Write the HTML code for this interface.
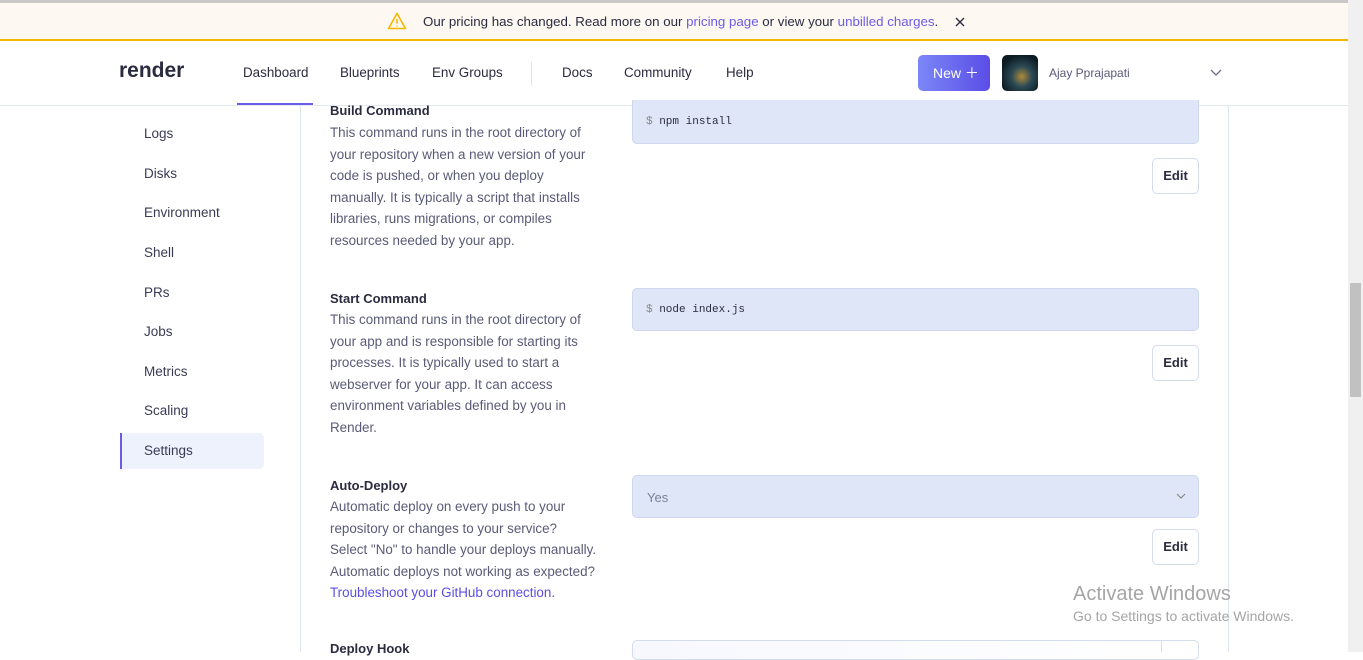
<!DOCTYPE html>
<html><head><style>
*{box-sizing:border-box;margin:0;padding:0}
body{width:1363px;height:652px;overflow:hidden;background:#fff;font-family:"Liberation Sans",sans-serif;position:relative;color:#3d3d5c}
.a{position:absolute}
.banner{left:0;top:0;width:1348px;height:41px;background:#fdf8f1;border-top:3px solid #c8c8c8;border-bottom:2px solid #f5b800;font-size:13.3px;color:#2b2b40}
.hdr{left:0;top:41px;width:1348px;height:65px;border-bottom:1px solid #e3e8f2}
.nav{font-size:13.4px;color:#2b2b40;top:24px}
.side{font-size:13.5px;color:#3a3a55}
.lbl{font-size:13px;font-weight:bold;color:#2b2b40}
.desc{font-size:13.4px;color:#5a5a78;line-height:21.5px;white-space:nowrap}
.box{left:632px;width:567px;background:#dfe6f7;border:1px solid #cdd7ee;border-radius:5px;font-family:"Liberation Mono",monospace;font-size:11px;color:#2b2b40}
.edit{left:1152px;width:47px;height:36px;border:1px solid #d5dcec;border-radius:5px;font-size:13px;color:#2b2b40;text-align:center;line-height:34px;font-weight:bold}
</style></head><body>
<div class="a banner">
<svg class="a" style="left:387px;top:9px" width="20" height="18" viewBox="0 0 20 18"><path d="M10 1.5L1.5 16.5H18.5Z" fill="none" stroke="#f5b800" stroke-width="1.6" stroke-linejoin="round"/><path d="M10 7v4.5M10 13.5v.8" stroke="#f5b800" stroke-width="1.6"/></svg>
<div class="a" style="left:423px;top:11px">Our pricing has changed. Read more on our <span style="color:#6b5ce7">pricing page</span> or view your <span style="color:#6b5ce7">unbilled charges</span>.</div>
<svg class="a" style="left:955px;top:14px" width="10" height="10"><path d="M1 1l8 8M9 1l-8 8" stroke="#2b2b40" stroke-width="1.4"/></svg>
</div>
<div class="a hdr">
<div class="a" style="left:119px;top:18px;font-size:21px;font-weight:bold;color:#2b2b40">render</div>
<div class="a nav" style="left:243px">Dashboard</div>
<div class="a" style="left:237px;top:62px;width:76px;height:2px;background:#6b5ce7"></div>
<div class="a nav" style="left:340px">Blueprints</div>
<div class="a nav" style="left:432px">Env Groups</div>
<div class="a" style="left:531px;top:21px;width:1px;height:23px;background:#dde2ec"></div>
<div class="a nav" style="left:562px">Docs</div>
<div class="a nav" style="left:624px">Community</div>
<div class="a nav" style="left:726px">Help</div>
<div class="a" style="left:918px;top:14px;width:72px;height:36px;border-radius:5px;background:linear-gradient(90deg,#7b87f7,#5a4de6);color:#fff;font-size:14px;line-height:36px;padding-left:15px">New ＋</div>
<div class="a" style="left:1002px;top:14px;width:36px;height:36px;border-radius:5px;background:radial-gradient(circle at 55% 60%,#b08a3a 0,#2b4a55 35%,#0c1a22 75%)"></div>
<div class="a" style="left:1049px;top:25px;font-size:12px;color:#5a5a78">Ajay Pprajapati</div>
<svg class="a" style="left:1210px;top:28px" width="12" height="8"><path d="M1 1l5 5 5-5" fill="none" stroke="#6a6f8a" stroke-width="1.3"/></svg>
</div>
<div class="a" style="left:300px;top:106px;width:1px;height:546px;background:#dde3f0"></div>
<div class="a" style="left:1228px;top:106px;width:1px;height:546px;background:#dde3f0"></div>
<div class="a side" style="left:144px;top:126px">Logs</div>
<div class="a side" style="left:144px;top:166px">Disks</div>
<div class="a side" style="left:144px;top:205px">Environment</div>
<div class="a side" style="left:144px;top:245px">Shell</div>
<div class="a side" style="left:144px;top:285px">PRs</div>
<div class="a side" style="left:144px;top:324px">Jobs</div>
<div class="a side" style="left:144px;top:364px">Metrics</div>
<div class="a side" style="left:144px;top:403px">Scaling</div>
<div class="a" style="left:120px;top:433px;width:144px;height:36px;background:#eef2fc;border-radius:0 5px 5px 0;border-left:2px solid #6b5ce7"></div>
<div class="a side" style="left:144px;top:443px">Settings</div>

<div class="a lbl" style="left:330px;top:103px">Build Command</div>
<div class="a desc" style="left:330px;top:122px">This command runs in the root directory of<br>your repository when a new version of your<br>code is pushed, or when you deploy<br>manually. It is typically a script that installs<br>libraries, runs migrations, or compiles<br>resources needed by your app.</div>
<div class="a box" style="top:100px;height:44px;border-top:none;border-radius:0 0 5px 5px;padding:16px 0 0 13px"><span style="color:#888">$</span> npm install</div>
<div class="a edit" style="top:158px">Edit</div>

<div class="a lbl" style="left:330px;top:291px">Start Command</div>
<div class="a desc" style="left:330px;top:309px">This command runs in the root directory of<br>your app and is responsible for starting its<br>processes. It is typically used to start a<br>webserver for your app. It can access<br>environment variables defined by you in<br>Render.</div>
<div class="a box" style="top:288px;height:43px;padding:15px 0 0 13px"><span style="color:#888">$</span> node index.js</div>
<div class="a edit" style="top:345px">Edit</div>

<div class="a lbl" style="left:330px;top:478px">Auto-Deploy</div>
<div class="a desc" style="left:330px;top:496px">Automatic deploy on every push to your<br>repository or changes to your service?<br>Select "No" to handle your deploys manually.<br>Automatic deploys not working as expected?<br><span style="color:#5b4ee0">Troubleshoot your GitHub connection</span>.</div>
<div class="a box" style="top:475px;height:43px;font-family:'Liberation Sans',sans-serif;font-size:13px;color:#7d8299;padding:14px 0 0 14px">Yes</div>
<svg class="a" style="left:1176px;top:493px" width="10" height="7"><path d="M1 1l4 4 4-4" fill="none" stroke="#888" stroke-width="1.2"/></svg>
<div class="a edit" style="top:529px">Edit</div>

<div class="a lbl" style="left:330px;top:641px">Deploy Hook</div>
<div class="a" style="left:632px;top:640px;width:567px;height:20px;border:1px solid #d5dcec;border-radius:5px;background:linear-gradient(90deg,#f6f8fe,#fff)"></div>
<div class="a" style="left:1161px;top:640px;width:1px;height:12px;background:#d5dcec"></div>

<div class="a" style="left:1073px;top:583px;font-size:20px;color:#a5a5a5">Activate Windows</div>
<div class="a" style="left:1073px;top:608px;font-size:14px;color:#a5a5a5">Go to Settings to activate Windows.</div>

<div class="a" style="left:1348px;top:0;width:15px;height:652px;background:#f0f0f0"></div>
<div class="a" style="left:1350px;top:283px;width:11px;height:114px;background:#c1c1c1"></div>
</body></html>
